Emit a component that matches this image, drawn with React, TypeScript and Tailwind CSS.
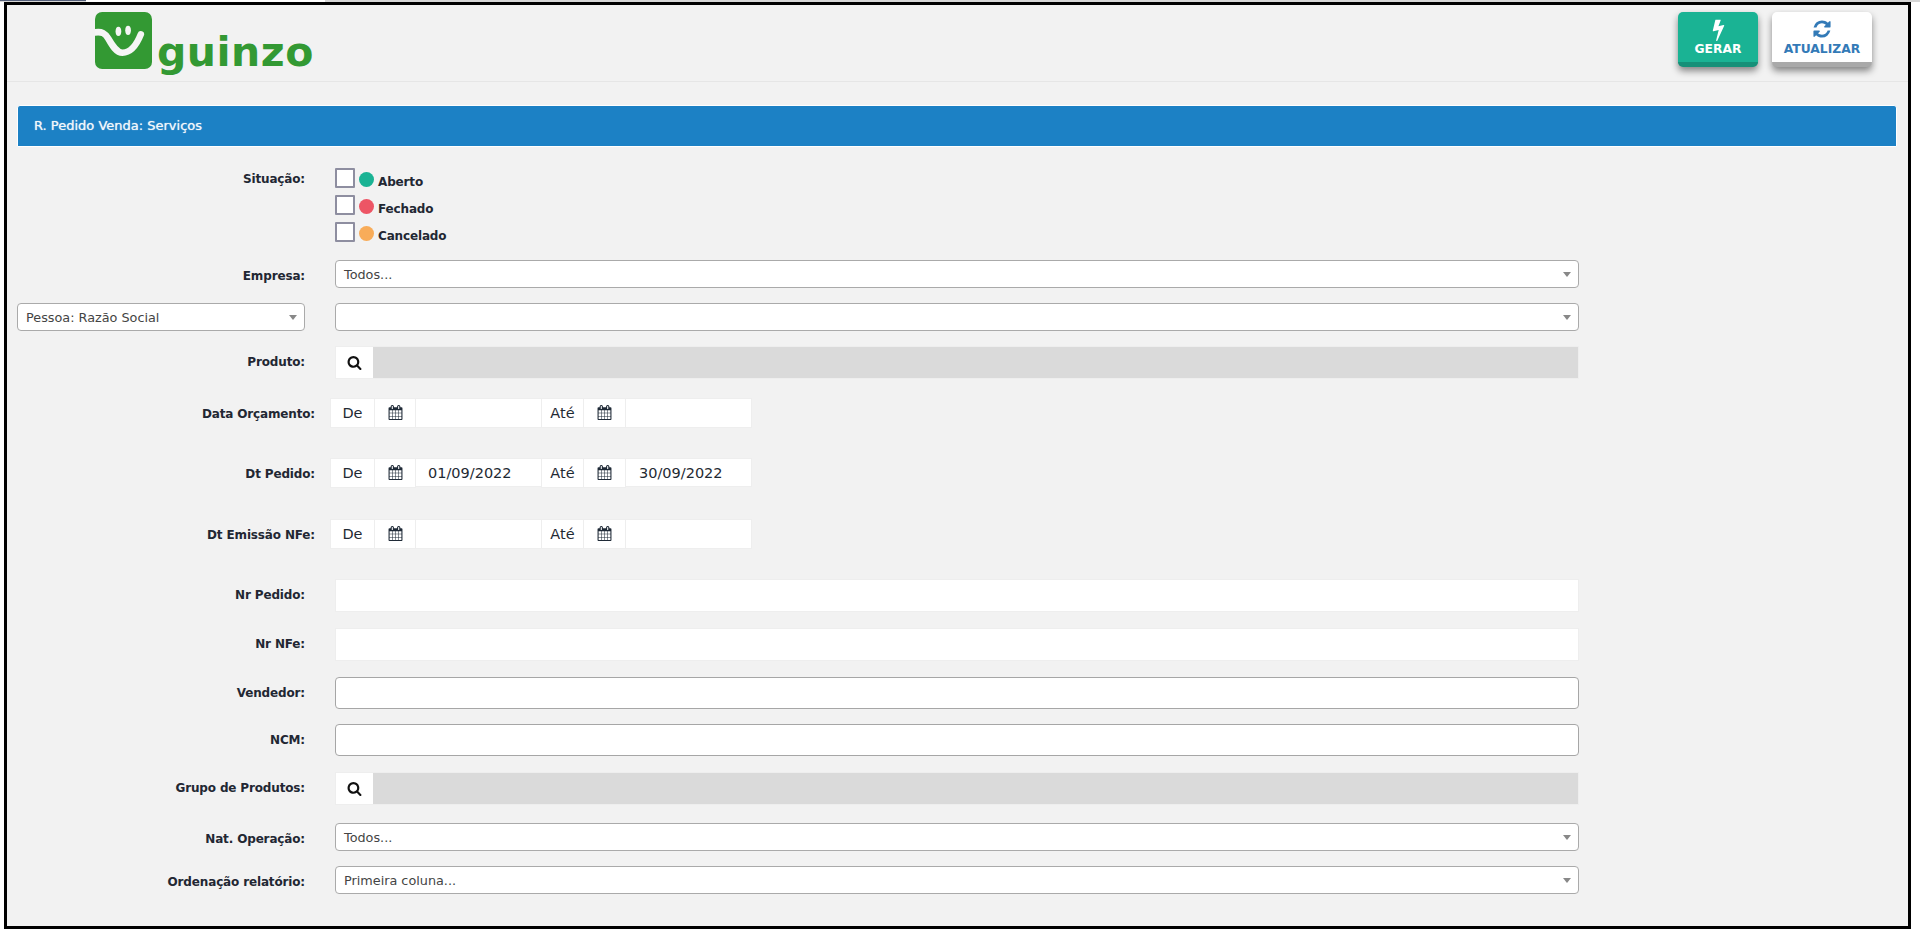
import type { ReactNode } from 'react'

const font = 'font-["DejaVu_Sans",Verdana,sans-serif]'

const BOLT =
  'M1333 566q18 20 7 44l-540 1157q-13 25-42 25-4 0-14-2-17-5-25.5-19t-4.5-30l197-808-406 101q-4 1-12 1-18 0-31-11-18-15-13-39l201-825q4-14 16-23t28-9h328q19 0 32 12.5t13 29.5q0 8-5 18l-171 463 396-98q8-2 12-2 19 0 34 15z'
const REFRESH =
  'M1639 1056q0 5-1 7-64 268-268 434.5t-478 166.5q-146 0-282.5-55t-243.5-157l-129 129q-19 19-45 19t-45-19-19-45v-448q0-26 19-45t45-19h448q26 0 45 19t19 45-19 45l-137 137q71 66 161 102t187 36q134 0 250-65t186-179q11-17 53-117 8-23 30-23h192q13 0 22.5 9.5t9.5 22.5zm25-800v448q0 26-19 45t-45 19h-448q-26 0-45-19t-19-45 19-45l138-138q-148-137-349-137-134 0-250 65t-186 179q-11 17-53 117-8 23-30 23h-199q-13 0-22.5-9.5t-9.5-22.5v-7q65-268 270-434.5t480-166.5q146 0 284 55.5t245 156.5l130-129q19-19 45-19t45 19 19 45z'
const CALENDAR =
  'M192 1664h288v-288h-288v288zm352 0h320v-288h-320v288zm-352-352h288v-320h-288v320zm352 0h320v-320h-320v320zm-352-384h288v-288h-288v288zm736 736h320v-288h-320v288zm-384-736h320v-288h-320v288zm768 736h288v-288h-288v288zm-384-352h320v-320h-320v320zm-352-864v-288q0-13-9.5-22.5t-22.5-9.5h-64q-13 0-22.5 9.5t-9.5 22.5v288q0 13 9.5 22.5t22.5 9.5h64q13 0 22.5-9.5t9.5-22.5zm736 864h288v-320h-288v320zm-384-384h320v-288h-320v288zm384 0h288v-288h-288v288zm32-480v-288q0-13-9.5-22.5t-22.5-9.5h-64q-13 0-22.5 9.5t-9.5 22.5v288q0 13 9.5 22.5t22.5 9.5h64q13 0 22.5-9.5t9.5-22.5zm384-64v1280q0 52-38 90t-90 38h-1408q-52 0-90-38t-38-90v-1280q0-52 38-90t90-38h128v-96q0-66 47-113t113-47h64q66 0 113 47t47 113v96h384v-96q0-66 47-113t113-47h64q66 0 113 47t47 113v96h128q52 0 90 38t38 90z'
const SEARCH =
  'M1216 832q0-185-131.5-316.5t-316.5-131.5-316.5 131.5-131.5 316.5 131.5 316.5 316.5 131.5 316.5-131.5 131.5-316.5zm512 832q0 52-38 90t-90 38q-54 0-90-38l-343-342q-179 124-399 124-143 0-273.5-55.5t-225-150-150-225-55.5-273.5 55.5-273.5 150-225 225-150 273.5-55.5 273.5 55.5 225 150 150 225 55.5 273.5q0 220-124 399l343 343q37 37 37 90z'

function Fa({ d, className }: { d: string; className: string }) {
  return (
    <svg viewBox="0 0 1792 1792" fill="currentColor" className={className} aria-hidden="true">
      <path d={d} />
    </svg>
  )
}

function Logo() {
  return (
    <div className="flex items-end">
      <svg viewBox="0 0 56 56" className="h-[57px] w-[57px] shrink-0" aria-hidden="true">
        <rect width="56" height="56" rx="7" fill="#339933" />
        <path
          d="M0 20c7-1 10 1 13 6 4 7 8 14 14 14 8 0 14-8 18-18"
          fill="none"
          stroke="#f5f5f5"
          strokeWidth="6.500"
          strokeLinecap="round"
        />
        <ellipse cx="23" cy="19" rx="2.800" ry="4.600" fill="#f5f5f5" />
        <ellipse cx="32.500" cy="18" rx="2.800" ry="4.600" fill="#f5f5f5" />
      </svg>
      <span className={`ml-[5px] -mb-[11px] text-[41px] leading-[56px] font-bold tracking-[0.5px] text-[#339933] ${font}`}>
        guinzo
      </span>
    </div>
  )
}

function Label({ children, className = 'w-[288px]' }: { children?: ReactNode; className?: string }) {
  return (
    <div className={`shrink-0 text-right text-[12px] font-bold tracking-[-0.15px] text-[#222733] ${className}`}>
      {children}
    </div>
  )
}

function Select({ value, className = 'w-[1244px] ml-[30px]' }: { value?: string; className?: string }) {
  return (
    <div
      className={`flex h-[28px] items-center justify-between rounded-[4px] border border-[#aaaaaa] bg-white pl-[8px] pr-[7px] text-[12.8px] text-[#444444] ${className}`}
    >
      <span className="mt-[2px]">{value}</span>
      <span className="h-0 w-0 border-x-[4px] border-t-[5px] border-x-transparent border-t-[#888888]" />
    </div>
  )
}

function SelectRow({ label, value, mt }: { label: string; value?: string; mt: string }) {
  return (
    <div className={`flex items-center ${mt}`}>
      <Label className="w-[288px] mt-[3px]">{label}</Label>
      <Select value={value} />
    </div>
  )
}

function LookupRow({ label, mt }: { label: string; mt: string }) {
  return (
    <div className={`flex items-center ${mt}`}>
      <Label className="w-[288px] -mt-[2px]">{label}</Label>
      <div className="ml-[30px] flex h-[33px] w-[1244px] border border-[#eeeeee]">
        <div className="flex w-[37px] items-center justify-center bg-white text-[#111111]">
          <Fa d={SEARCH} className="h-[15px] w-[15px]" />
        </div>
        <div className="flex-1 bg-[#dadada]" />
      </div>
    </div>
  )
}

function DateCell({ children, className }: { children?: ReactNode; className: string }) {
  return (
    <div
      className={`flex shrink-0 items-center border border-[#eeeeee] bg-white pt-[2px] text-[14.5px] text-[#1f2a33] ${className}`}
    >
      {children}
    </div>
  )
}

function Calendar({ className }: { className: string }) {
  return (
    <DateCell className={`-ml-px h-[30px] justify-center ${className}`}>
      <Fa d={CALENDAR} className="-mt-[3px] h-[15px] w-[15px] text-[#1f2a37]" />
    </DateCell>
  )
}

function DateRow({ label, from, to, mt }: { label: string; from?: string; to?: string; mt: string }) {
  const inputHeight = from ? 'h-[29px]' : 'h-[30px]'
  return (
    <div className={`flex items-center ${mt}`}>
      <Label className="w-[298px] mt-[2px]">{label}</Label>
      <div className="ml-[15px] flex items-start">
        <DateCell className="h-[30px] w-[45px] justify-center">De</DateCell>
        <Calendar className="w-[42px]" />
        <DateCell className={`-ml-px w-[127px] pl-[12px] ${inputHeight}`}>{from}</DateCell>
        <DateCell className="-ml-px h-[30px] w-[43px] justify-center">Até</DateCell>
        <Calendar className="w-[43px]" />
        <DateCell className={`-ml-px w-[127px] pl-[13px] ${inputHeight}`}>{to}</DateCell>
      </div>
    </div>
  )
}

function TextRow({ label, mt, strong }: { label: string; mt: string; strong?: boolean }) {
  return (
    <div className={`flex items-center ${mt}`}>
      <Label className="w-[288px] -mt-[1px]">{label}</Label>
      <div
        className={`ml-[30px] w-[1244px] bg-white ${
          strong ? 'h-[32px] rounded-[4px] border border-[#a6a6a6]' : 'h-[33px] border border-[#eeeeee]'
        }`}
      />
    </div>
  )
}

function Status({ label, color }: { label: string; color: string }) {
  return (
    <div className="flex h-[20px] items-start">
      <span className="h-[20px] w-[20px] rounded-[1px] border-2 border-[#8e8ea0] bg-white" />
      <span className={`ml-[4px] mt-[4px] h-[15px] w-[15px] rounded-full ${color}`} />
      <span className="ml-[4px] mt-[6px] text-[12px] leading-[16px] font-bold tracking-[-0.15px] text-[#222733]">
        {label}
      </span>
    </div>
  )
}

function ActionButton({
  icon,
  iconSize,
  label,
  className,
}: {
  icon: string
  iconSize: string
  label: string
  className: string
}) {
  return (
    <div
      className={`flex h-[55px] flex-col items-center rounded-[5px] border-b-[5px] pt-[4px] text-[12.3px] font-bold leading-[14px] shadow-[0_4px_7px_rgba(0,0,0,0.45)] ${className}`}
    >
      <div className="flex h-[26px] items-center justify-center">
        <Fa d={icon} className={iconSize} />
      </div>
      <span>{label}</span>
    </div>
  )
}

export default function App() {
  return (
    <div className={`h-[940px] w-[1920px] overflow-hidden bg-white ${font}`}>
      <div className="flex h-[2px] bg-[#d6d6d6]">
        <div className="h-[1px] w-[86px] bg-[#55607a]" />
        <div className="h-[2px] w-[239px] bg-white" />
      </div>
      <div className="ml-[4px] h-[927px] w-[1907px] border-[3px] border-black bg-[#f2f2f2]">
        <header className="flex h-[77px] items-start justify-between border-b border-[#e6e6e6] pt-[7px] pl-[88px] pr-[36px]">
          <Logo />
          <div className="flex gap-[14px]">
            <ActionButton
              icon={BOLT}
              iconSize="h-[23px] w-[23px]"
              label="GERAR"
              className="w-[80px] border-[#169078] bg-[#1ab394] text-white"
            />
            <ActionButton
              icon={REFRESH}
              iconSize="h-[20px] w-[20px]"
              label="ATUALIZAR"
              className="w-[100px] border-[#a9a9a9] bg-white text-[#337ab7]"
            />
          </div>
        </header>

        <div className="ml-[10px] mt-[23px] flex h-[42px] w-[1880px] items-center rounded-t-[3px] border border-white bg-[#1c81c5] pl-[16px] text-[13px] text-[#f2f7fb] [text-shadow:0_0_1px_rgba(255,255,255,0.8)]">
          R. Pedido Venda: Serviços
        </div>

        <div className="ml-[10px]">
          <div className="mt-[21px] flex items-start">
            <Label className="w-[288px] pt-[2px]">Situação:</Label>
            <div className="ml-[30px] flex flex-col gap-[7px]">
              <Status label="Aberto" color="bg-[#1ab394]" />
              <Status label="Fechado" color="bg-[#ed5565]" />
              <Status label="Cancelado" color="bg-[#f8ac59]" />
            </div>
          </div>

          <SelectRow label="Empresa:" value="Todos..." mt="mt-[18px]" />

          <div className="mt-[15px] flex items-center">
            <Select value="Pessoa: Razão Social" className="w-[288px]" />
            <Select />
          </div>

          <LookupRow label="Produto:" mt="mt-[15px]" />

          <DateRow label="Data Orçamento:" mt="mt-[19px]" />
          <DateRow label="Dt Pedido:" from="01/09/2022" to="30/09/2022" mt="mt-[30px]" />
          <DateRow label="Dt Emissão NFe:" mt="mt-[31px]" />

          <TextRow label="Nr Pedido:" mt="mt-[30px]" />
          <TextRow label="Nr NFe:" mt="mt-[16px]" />
          <TextRow label="Vendedor:" mt="mt-[16px]" strong />
          <TextRow label="NCM:" mt="mt-[15px]" strong />

          <LookupRow label="Grupo de Produtos:" mt="mt-[16px]" />

          <SelectRow label="Nat. Operação:" value="Todos..." mt="mt-[18px]" />
          <SelectRow label="Ordenação relatório:" value="Primeira coluna..." mt="mt-[15px]" />
        </div>
      </div>
    </div>
  )
}
